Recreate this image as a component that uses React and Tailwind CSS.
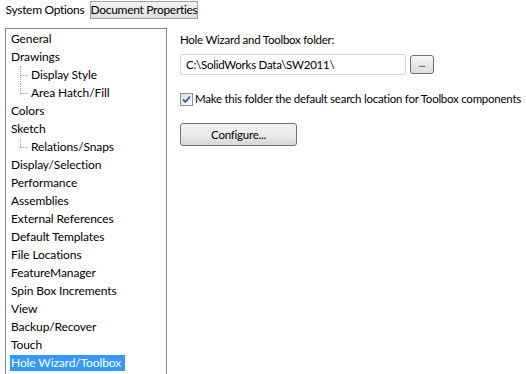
import React from 'react';

const items = [
  { label: 'General' },
  { label: 'Drawings' },
  { label: 'Display Style', child: true },
  { label: 'Area Hatch/Fill', child: true, last: true },
  { label: 'Colors' },
  { label: 'Sketch' },
  { label: 'Relations/Snaps', child: true, last: true },
  { label: 'Display/Selection' },
  { label: 'Performance' },
  { label: 'Assemblies' },
  { label: 'External References' },
  { label: 'Default Templates' },
  { label: 'File Locations' },
  { label: 'FeatureManager' },
  { label: 'Spin Box Increments' },
  { label: 'View' },
  { label: 'Backup/Recover' },
  { label: 'Touch' },
  { label: 'Hole Wizard/Toolbox', selected: true },
];

const TreeRow = ({ item }) => (
  <div className="h-[18px] flex items-center relative">
    {item.child && (
      <>
        <div className={`absolute left-[13px] top-0 w-0 border-l border-dotted border-[#a0a0a0] ${item.last ? 'h-[9px]' : 'h-[18px]'}`}></div>
        <div className="absolute left-[13px] top-[9px] w-[8px] border-t border-dotted border-[#a0a0a0]"></div>
      </>
    )}
    <span
      className={`${item.child ? 'ml-[23px]' : 'ml-[3px]'} px-[1px] leading-[16px] ${
        item.selected ? 'bg-[#3399ff] text-white pr-[4px]' : 'text-black'
      }`}
    >
      {item.label}
    </span>
  </div>
);

export default function App() {
  return (
    <div className="w-[526px] h-[374px] bg-white overflow-hidden text-[12px] tracking-[-0.1px] font-['Lato',sans-serif] text-black">
      {/* Tabs */}
      <div className="flex items-end h-[20px] whitespace-nowrap tracking-[-0.3px]">
        <div className="h-[20px] w-[90px] shrink-0 flex items-center justify-center bg-white">System Options</div>
        <div className="h-[18px] mb-[1px] w-[108px] shrink-0 flex items-center justify-center border border-[#a0a0a0] bg-gradient-to-b from-[#f2f2f2] to-[#e0e0e0]">
          Document Properties
        </div>
      </div>

      <div className="flex pt-[8px]">
        {/* Tree */}
        <div className="ml-[5px] w-[162px] shrink-0 h-[360px] border border-[#828790] pt-[1px] pl-[1px]">
          {items.map((it) => (
            <TreeRow key={it.label} item={it} />
          ))}
        </div>

        {/* Right panel */}
        <div className="ml-[13px] pt-[4px] flex flex-col items-start whitespace-nowrap text-[11.5px] tracking-[-0.25px]">
          <div className="leading-[16px]">Hole Wizard and Toolbox folder:</div>
          <div className="flex items-center mt-[6px]">
            <div className="w-[226px] h-[21px] border border-[#d5d9de] rounded-[2px] flex items-center pl-[5px]">
              C:\SolidWorks Data\SW2011\
            </div>
            <div className="ml-[4px] w-[24px] h-[19px] border border-[#707070] rounded-[3px] bg-gradient-to-b from-[#f4f4f4] to-[#dcdcdc] flex items-center justify-center leading-none text-[10px] pb-[3px]">
              ...
            </div>
          </div>
          <div className="flex items-center mt-[16px]">
            <div className="w-[13px] h-[13px] border border-[#8e8f8f] bg-gradient-to-br from-[#dcdcdc] to-white flex items-center justify-center">
              <svg width="9" height="9" viewBox="0 0 9 9">
                <path d="M1 4.5 L3.5 7 L8 1.5" fill="none" stroke="#3a5a9a" strokeWidth="1.8" />
              </svg>
            </div>
            <span className="ml-[2px] leading-[16px]">Make this folder the default search location for Toolbox components</span>
          </div>
          <div className="mt-[16px] w-[117px] h-[23px] border border-[#707070] rounded-[3px] bg-gradient-to-b from-[#f2f2f2] via-[#ebebeb] to-[#d6d6d6] flex items-center justify-center">
            Configure...
          </div>
        </div>
      </div>
    </div>
  );
}
